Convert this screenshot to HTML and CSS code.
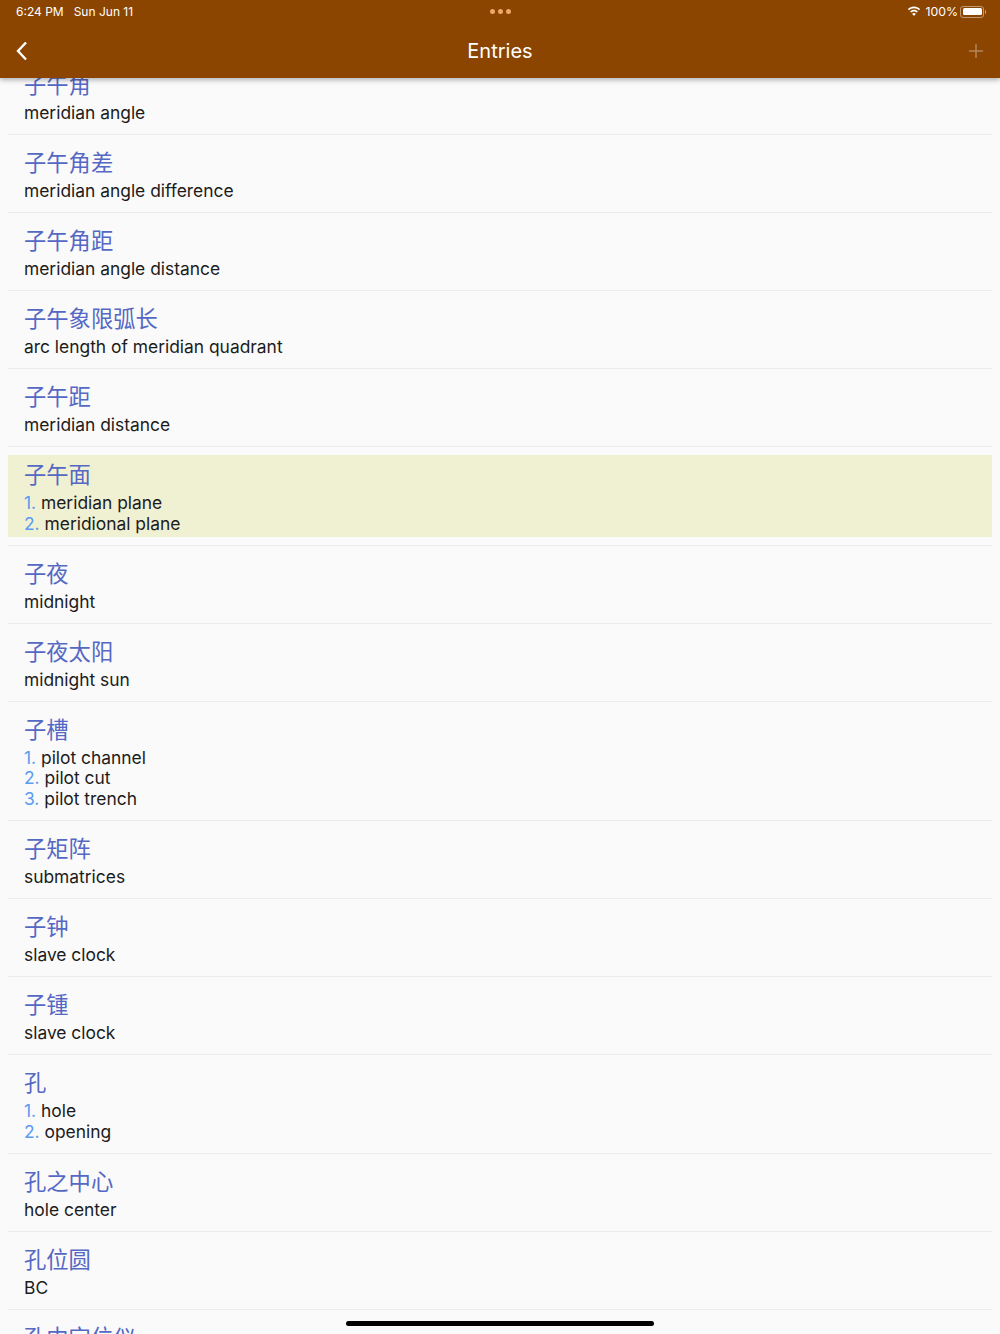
FILE: index.html
```html
<!doctype html>
<html lang="zh">
 <head>
  <meta charset="utf-8">
  <title>Entries</title>
  <link rel="stylesheet" href="styles.css">
 </head>
 <body>
  <header class="app-bar">
   <div class="status-bar">
    <div class="status-left"><span>6:24 PM</span><span>Sun Jun 11</span></div>
    <div class="status-dots"><i></i><i></i><i></i></div>
    <div class="status-right">
     <svg class="wifi" width="14" height="11" viewBox="0 0 14 11"><path d="M7 2.2c2 0 3.8.8 5.1 2l1-1.1C11.500 1.600 9.400.6 7 .6S2.500 1.600.9 3.100l1 1.100c1.300-1.200 3.100-2 5.100-2zM7 5.400c1.100 0 2.100.4 2.900 1.100l1-1.100C9.900 4.400 8.500 3.800 7 3.800s-2.900.6-3.900 1.600l1 1.100c.8-.7 1.800-1.100 2.900-1.100zM7 7c-.8 0-1.400.3-1.900.8L7 10l1.900-2.200C8.400 7.300 7.800 7 7 7z" fill="#fff"/></svg>
     <span>100%</span>
     <div class="battery"><div class="battery-fill"></div></div>
    </div>
   </div>
   <div class="nav-bar">
    <svg class="nav-icon" width="14" height="20" viewBox="0 0 14 20"><path d="M11 1.500 3 10l8 8.500" fill="none" stroke="#fff" stroke-width="2.400"/></svg>
    <h1 class="nav-title">Entries</h1>
    <svg class="nav-icon" width="14" height="14" viewBox="0 0 14 14"><path d="M7 0v14M0 7h14" fill="none" stroke="#fff" stroke-opacity=".35" stroke-width="1.500"/></svg>
   </div>
  </header>

  <main class="entry-list">
   <div class="entry"><div class="entry-inner"><div class="term">子午角</div><div class="def">meridian angle</div></div></div>
   <div class="entry"><div class="entry-inner"><div class="term">子午角差</div><div class="def">meridian angle difference</div></div></div>
   <div class="entry"><div class="entry-inner"><div class="term">子午角距</div><div class="def">meridian angle distance</div></div></div>
   <div class="entry"><div class="entry-inner"><div class="term">子午象限弧长</div><div class="def">arc length of meridian quadrant</div></div></div>
   <div class="entry"><div class="entry-inner"><div class="term">子午距</div><div class="def">meridian distance</div></div></div>
   <div class="entry"><div class="entry-inner selected"><div class="term">子午面</div><div class="def"><span class="num">1.</span> meridian plane</div><div class="def"><span class="num">2.</span> meridional plane</div></div></div>
   <div class="entry"><div class="entry-inner"><div class="term">子夜</div><div class="def">midnight</div></div></div>
   <div class="entry"><div class="entry-inner"><div class="term">子夜太阳</div><div class="def">midnight sun</div></div></div>
   <div class="entry"><div class="entry-inner"><div class="term">子槽</div><div class="def"><span class="num">1.</span> pilot channel</div><div class="def"><span class="num">2.</span> pilot cut</div><div class="def"><span class="num">3.</span> pilot trench</div></div></div>
   <div class="entry"><div class="entry-inner"><div class="term">子矩阵</div><div class="def">submatrices</div></div></div>
   <div class="entry"><div class="entry-inner"><div class="term">子钟</div><div class="def">slave clock</div></div></div>
   <div class="entry"><div class="entry-inner"><div class="term">子锺</div><div class="def">slave clock</div></div></div>
   <div class="entry"><div class="entry-inner"><div class="term">孔</div><div class="def"><span class="num">1.</span> hole</div><div class="def"><span class="num">2.</span> opening</div></div></div>
   <div class="entry"><div class="entry-inner"><div class="term">孔之中心</div><div class="def">hole center</div></div></div>
   <div class="entry"><div class="entry-inner"><div class="term">孔位圆</div><div class="def">BC</div></div></div>
   <div class="entry"><div class="entry-inner"><div class="term">孔中定位仪</div></div></div>
  </main>

  <div class="home-bar"></div>
 </body>
</html>
```

FILE: styles.css
```css
html, body {
	margin: 0;
	padding: 0;
	height: 1334px;
	overflow: hidden;
}

body {
	position: relative;
	background-color: #fafafa;
	font-family: Inter, "Noto Sans CJK SC", sans-serif;
}

/* top bar */
.app-bar {
	position: relative;
	z-index: 2;
	height: 78px;
	background: #8b4500;
	color: #fff;
	box-shadow: 0 2px 5px rgba(0, 0, 0, 0.3);
}

.status-bar {
	display: grid;
	grid-template-columns: 1fr auto 1fr;
	align-items: center;
	height: 23px;
	padding: 0 16px;
	font-size: 12px;
}

.status-left {
	display: flex;
	gap: 10px;
}

.status-dots {
	display: flex;
	gap: 3px;
}

.status-dots i {
	width: 5px;
	height: 5px;
	border-radius: 50%;
	background: #f0a868;
}

.status-right {
	display: flex;
	justify-content: flex-end;
	align-items: center;
	gap: 4px;
	font-size: 12.300px;
}

.battery {
	position: relative;
	width: 24px;
	height: 12px;
	box-sizing: border-box;
	padding: 1.500px;
	border: 1px solid rgba(255, 255, 255, 0.45);
	border-radius: 3px;
	margin-left: -2px;
}

.battery::after {
	content: "";
	position: absolute;
	top: 3px;
	right: -3px;
	width: 1.500px;
	height: 4px;
	border-radius: 0 1px 1px 0;
	background: rgba(255, 255, 255, 0.5);
}

.battery-fill {
	height: 100%;
	border-radius: 1.500px;
	background: #fff;
}

.nav-bar {
	display: flex;
	align-items: center;
	justify-content: space-between;
	box-sizing: border-box;
	height: 55px;
	padding: 1px 17px 0 15px;
}

.nav-icon {
	flex: none;
}

.nav-title {
	margin: 0;
	font-size: 20px;
	font-weight: 400;
	transform: translateX(1px);
}

/* list */
.entry-list {
	margin-top: -21px;
}

.entry {
	margin: 0 8px;
	padding: 8px 0;
	border-bottom: 1px solid #ececec;
}

.entry-inner {
	padding: 2px 16px 2.300px;
}

.selected {
	background: #f0f0d2;
}

.term {
	font-size: 22.300px;
	line-height: 36px;
	color: #5568c4;
}

.def {
	font-size: 17.400px;
	line-height: 20.700px;
	color: #1c1c1c;
}

.num {
	color: #5b9bf0;
}

.home-bar {
	position: absolute;
	left: 346px;
	bottom: 8px;
	width: 308px;
	height: 5px;
	border-radius: 3px;
	background: #000;
}
```
